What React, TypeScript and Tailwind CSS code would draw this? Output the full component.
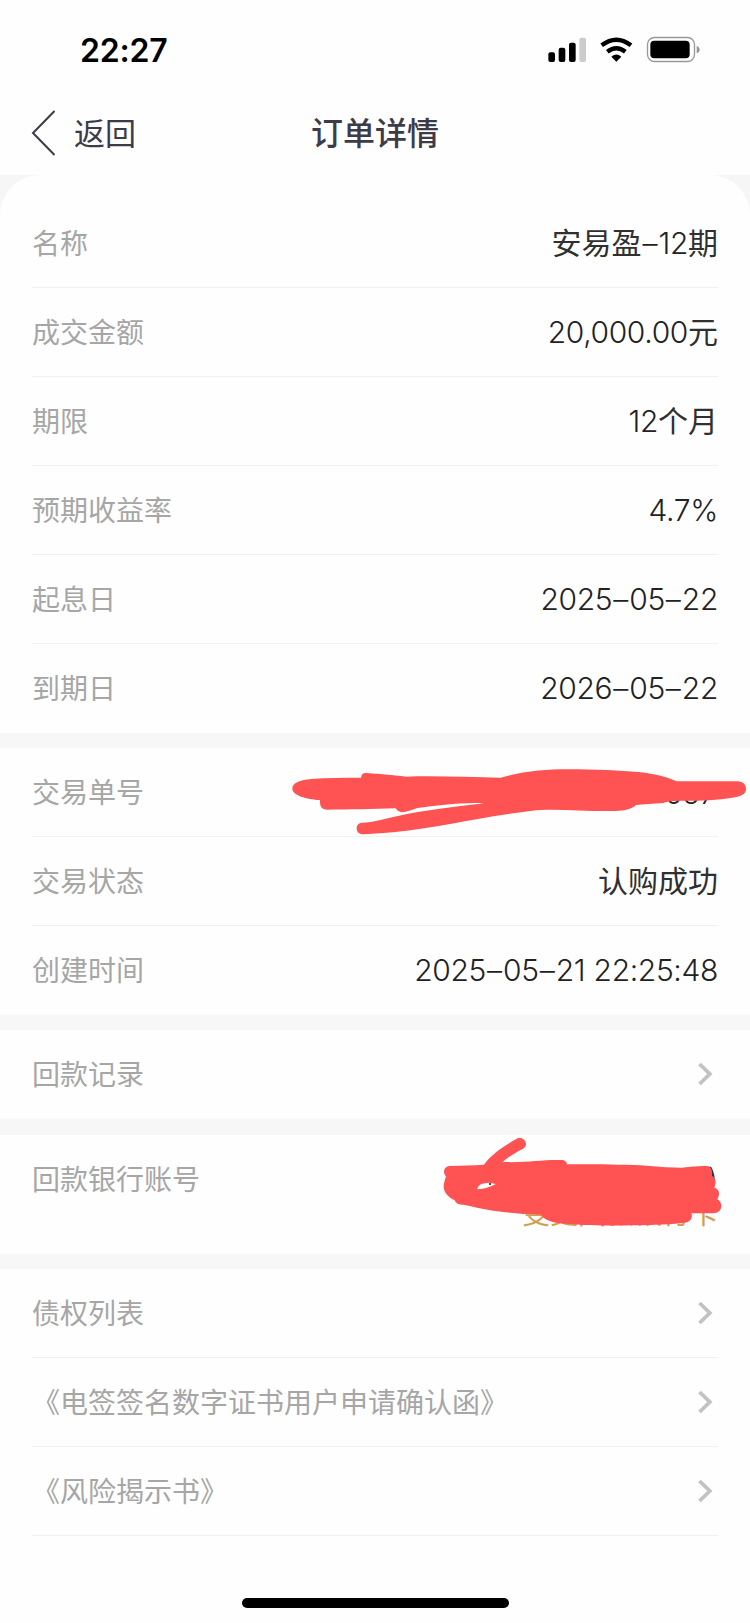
import React from 'react';

interface RowProps {
  label: string;
  value?: string;
  last?: boolean;
  children?: React.ReactNode;
}

const ChevronRight: React.FC = () => (
  <svg className="mr-[5px] h-6 w-4" viewBox="0 0 16 24" fill="none">
    <path d="M2.5 2 L12.8 12 L2.5 22" stroke="#c2c2c2" strokeWidth="3.8" />
  </svg>
);

// Digits run lighter and tighter than the Chinese text around them
const Value: React.FC<{ text: string }> = ({ text }) => (
  <span className="text-[30px] leading-none whitespace-pre text-[#303030]">
    {text.split(/([\d.,:%]+|–)/).map((part, i) => {
      if (part === '–') {
        return <span key={i} className="mx-[1px] font-light text-[#222]">{part}</span>;
      }
      if (/^[\d.,:%]+$/.test(part)) {
        return <span key={i} className="font-light tracking-[-0.35px] text-[#222]">{part}</span>;
      }
      return part;
    })}
  </span>
);

const Row: React.FC<RowProps> = ({ label, value, last, children }) => (
  <div
    className={`mx-8 flex h-[89px] items-center justify-between border-b ${
      last ? 'border-transparent' : 'border-[#f1f1f1]'
    }`}
  >
    <span className="pt-[2px] text-[28px] leading-none text-[#a6a6a6]">{label}</span>
    {value && <Value text={value} />}
    {children}
  </div>
);

const StatusBar: React.FC = () => (
  <div className="flex h-[100px] items-center justify-between pr-[45px] pl-[80px]">
    <span className="pt-[2px] text-[32px] leading-none font-semibold tracking-[-0.2px] text-black">22:27</span>
    <svg className="h-[30px] w-[160px]" viewBox="510 105 480 90" fill="none">
      {/* Signal */}
      <rect x="520" y="157" width="20" height="29" rx="6" fill="#000" />
      <rect x="551" y="143" width="20" height="43" rx="6" fill="#000" />
      <rect x="582" y="128" width="20" height="58" rx="6" fill="#000" />
      <rect x="613" y="113" width="20" height="73" rx="6" fill="#ccc" />
      {/* Wifi */}
      <path d="M680 136 Q724 102 768 136" stroke="#000" strokeWidth="13" />
      <path d="M697 155 Q724 134 751 155" stroke="#000" strokeWidth="13" />
      <path d="M709 170 Q724 157 739 170 L724 185 Z" fill="#000" />
      {/* Battery */}
      <rect x="817.5" y="112.5" width="141" height="72" rx="21" stroke="#999" strokeWidth="4" />
      <rect x="826" y="122" width="118" height="53" rx="12" fill="#000" />
      <path d="M965 138 Q974 141 974 149 Q974 157 965 160 Z" fill="#999" />
    </svg>
  </div>
);

const NavBar: React.FC = () => (
  <div className="grid h-[75px] grid-cols-3 items-center pb-[8px] text-[#3d3b47]">
    <div className="flex items-center gap-[18px] pl-[31px]">
      <svg className="h-[48px] w-[25px]" viewBox="0 0 25 48" fill="none">
        <path d="M23.5 1 L2 23 L23.5 45" stroke="currentColor" strokeWidth="2" />
      </svg>
      <span className="text-[31px] leading-none">返回</span>
    </div>
    <h1 className="text-center text-[32px] leading-none font-medium">订单详情</h1>
  </div>
);

const OrderScribble: React.FC = () => (
  <svg className="absolute top-[-8px] left-[280px] h-[110px] w-[470px]" viewBox="0 0 1410 330">
    <path
      fill="#ff5252"
      d="M37 146 C37 128 60 120 95 117 C140 113 190 113 243 113 C245 102 250 98 260 99 C300 102 350 106 380 110
        C470 107 570 112 662 113 C730 93 800 88 860 88 C950 88 1020 92 1075 96 C1130 102 1160 111 1190 124
        L1372 124 C1390 125 1398 134 1398 147 C1398 160 1388 166 1372 170 C1330 179 1270 183 1210 182
        C1180 182 1160 184 1150 189 C1120 192 1090 192 1068 195 C1055 207 1038 212 1005 213
        C930 214 860 208 800 209 C740 211 690 222 640 229 C530 248 400 275 300 280 L250 283
        C237 283 230 276 230 265 C230 254 237 248 250 248 C280 247 310 238 340 231 C430 210 530 200 612 190
        C550 186 470 197 412 204 C395 210 380 215 364 217 C356 215 350 210 347 205
        C280 207 200 209 140 209 C125 208 119 200 120 180 C80 178 37 166 37 146 Z"
    />
  </svg>
);

const AccountScribble: React.FC = () => (
  <svg className="absolute top-[-14px] left-[420px] h-[150px] w-[330px]" viewBox="0 0 990 450">
    <path
      fill="#ff5252"
      d="M88 135 C125 133 160 133 192 131 C215 100 250 76 293 52 C305 48 317 56 318 69 C318 78 312 83 302 87
        C282 98 262 110 248 123 C280 124 320 123 345 120 C375 117 405 116 428 117 C438 120 441 125 441 130
        C540 129 620 131 680 134 C720 137 755 140 785 140 C820 137 845 134 866 136 C876 142 878 154 875 164
        C888 169 889 184 883 200 C898 204 901 218 892 235 C902 240 906 252 903 262 C899 273 890 277 872 277
        L814 277 C819 290 812 302 796 305 C760 310 700 312 640 313 C570 315 500 313 450 309
        C410 307 375 302 363 281 C310 280 260 275 220 269 C185 263 155 256 130 251 C115 252 107 247 104 238
        C88 230 74 218 71 200 C71 187 74 177 78 167 C68 155 70 138 88 135 Z"
    />
    <path fill="#fefefe" d="M172 203 C175 190 187 186 208 185 L227 189 C212 198 195 203 172 205 Z" />
    <circle cx="210" cy="189" r="3" fill="#111" />
  </svg>
);

const Divider: React.FC = () => <div className="h-[15.5px] bg-[#f7f7f7]" />;

const App: React.FC = () => {
  return (
    <div className="h-[1623px] w-[750px] overflow-hidden bg-[#fefefe] font-['Inter','Noto_Sans_CJK_SC',sans-serif]">
      <StatusBar />
      <NavBar />

      <div className="bg-[#f6f6f6]">
        <section className="h-[557.5px] rounded-t-[40px] bg-[#fefefe] pt-[24px]">
          <Row label="名称" value="安易盈–12期" />
          <Row label="成交金额" value="20,000.00元" />
          <Row label="期限" value="12个月" />
          <Row label="预期收益率" value="4.7%" />
          <Row label="起息日" value="2025–05–22" />
          <Row label="到期日" value="2026–05–22" last />
        </section>
      </div>

      <Divider />

      <section className="relative h-[266.5px]">
        <Row label="交易单号">
          <span className="mr-[2px] pt-[3px] text-[29px] leading-none font-light text-[#222]">057</span>
        </Row>
        <Row label="交易状态" value="认购成功" />
        <Row label="创建时间" value="2025–05–21 22:25:48" last />
        <OrderScribble />
      </section>

      <Divider />

      <section>
        <Row label="回款记录" last>
          <ChevronRight />
        </Row>
      </section>

      <Divider />

      <section className="relative h-[119px]">
        <Row label="回款银行账号" value=")" last />
        <div className="mx-8 -mt-[24px] text-right text-[28px] leading-none text-[#cfa050]">
          变更回款银行卡
        </div>
        <AccountScribble />
      </section>

      <Divider />

      <section>
        <Row label="债权列表">
          <ChevronRight />
        </Row>
        <Row label="《电签签名数字证书用户申请确认函》">
          <ChevronRight />
        </Row>
        <Row label="《风险揭示书》">
          <ChevronRight />
        </Row>
      </section>

      {/* Home indicator */}
      <div className="mx-auto mt-[62px] h-[10px] w-[267px] rounded-full bg-black" />
    </div>
  );
};

export default App;
